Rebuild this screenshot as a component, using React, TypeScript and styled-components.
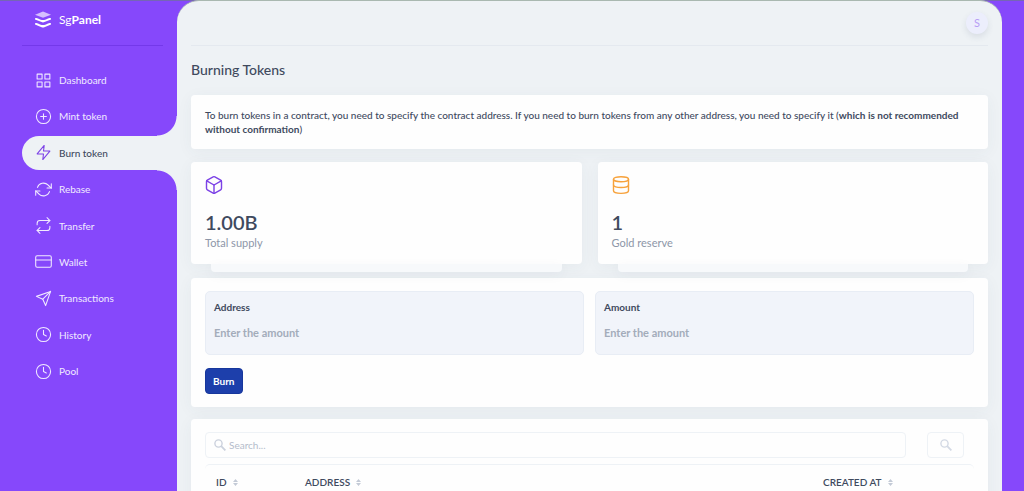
import React from "react";
import styled, { createGlobalStyle, css } from "styled-components";
import {
  FiBox,
  FiClock,
  FiCreditCard,
  FiDatabase,
  FiGrid,
  FiPlusCircle,
  FiRefreshCw,
  FiRepeat,
  FiSend,
  FiZap,
} from "react-icons/fi";
import type { IconType } from "react-icons";

const color = {
  purple: "#8648fb",
  purpleLine: "#7438ea",
  surface: "#eef2f5",
  card: "#fefefe",
  text: "#3f4a5e",
  muted: "#8d96a8",
  faint: "#a3acba",
  border: "#eef2f6",
  icon: "#7c42e6",
};

const GlobalStyle = createGlobalStyle`
  *, *::before, *::after { box-sizing: border-box; }
  body {
    margin: 0;
    background: ${color.purple};
    color: ${color.text};
    font-family: Lato, "Open Sans", sans-serif;
    font-size: 10px;
    line-height: 14px;
  }
  button, input { font: inherit; color: inherit; }
  h1, p { margin: 0; }
`;

const Page = styled.div`
  display: flex;
  min-height: 100vh;
  padding-right: 22px;
  background: linear-gradient(#7566b4 1px, transparent 1px);
`;

const Sidebar = styled.aside`
  flex: 0 0 177px;
  padding-left: 22px;
`;

const Brand = styled.a`
  display: flex;
  align-items: center;
  gap: 7px;
  height: 46px;
  margin-right: 14px;
  padding: 0 0 5px 12px;
  border-bottom: 1px solid ${color.purpleLine};
  color: #fff;
  font-size: 12px;
  text-decoration: none;
`;

const Nav = styled.nav`
  display: flex;
  flex-direction: column;
  justify-content: space-between;
  height: 325px;
  margin-top: 17px;
`;

const curve = css`
  content: "";
  position: absolute;
  right: 0;
  width: 20px;
  height: 20px;
`;

const NavLink = styled.a<{ $active?: boolean }>`
  position: relative;
  display: flex;
  align-items: center;
  gap: 7px;
  height: 34px;
  padding-left: 13px;
  color: #f1eaff;
  text-decoration: none;

  svg {
    width: 17px;
    height: 17px;
    stroke-width: 1.5;
  }

  ${({ $active }) =>
    $active &&
    css`
      border-radius: 17px 0 0 17px;
      background: ${color.surface};
      color: ${color.text};
      font-weight: 500;

      svg {
        color: ${color.icon};
      }
      &::before {
        ${curve}
        bottom: 100%;
        background: radial-gradient(circle at 0 0, transparent 19px, ${color.surface} 20px);
      }
      &::after {
        ${curve}
        top: 100%;
        background: radial-gradient(circle at 0 100%, transparent 19px, ${color.surface} 20px);
      }
    `}
`;

const Content = styled.main`
  display: flex;
  flex: 1;
  flex-direction: column;
  min-width: 0;
  padding: 0 14px;
  border-top: 1px solid #a9b8b0;
  border-radius: 22px 22px 0 0;
  background: ${color.surface};
`;

const TopBar = styled.header`
  display: flex;
  align-items: center;
  justify-content: flex-end;
  height: 45px;
  border-bottom: 1px solid #e4e9ef;
`;

const Avatar = styled.button`
  width: 22px;
  height: 22px;
  padding: 0;
  border: 0;
  border-radius: 50%;
  background: #eceefc;
  color: #b79df5;
  font-size: 11px;
  box-shadow: 0 3px 6px rgba(60, 70, 110, 0.12);
`;

const Title = styled.h1`
  margin: 14px 0 15px;
  font-size: 14px;
  font-weight: 500;
  line-height: 20px;
`;

const Card = styled.section<{ $grow?: boolean }>`
  flex: ${({ $grow }) => ($grow ? "1 0 auto" : "none")};
  padding: 13px 14px;
  border-radius: 4px;
  background: ${color.card};
  box-shadow: 0 3px 16px rgba(60, 80, 100, 0.05);
`;

const Notice = styled.p`
  font-weight: 500;
`;

const Stats = styled.div`
  display: grid;
  grid-template-columns: 1fr 1fr;
  gap: 16px;
  margin: 13px 0 14px;
`;

const StatCard = styled(Card)<{ $accent: string }>`
  position: relative;
  height: 102px;

  > svg {
    display: block;
    width: 20px;
    height: 20px;
    margin-left: -1px;
    stroke-width: 1.7;
    color: ${({ $accent }) => $accent};
  }

  &::after {
    content: "";
    position: absolute;
    top: 100%;
    right: 20px;
    left: 20px;
    height: 8px;
    border-radius: 0 0 4px 4px;
    background: #f7f9fb;
    box-shadow: 0 3px 12px rgba(60, 80, 100, 0.05);
  }
`;

const StatValue = styled.p`
  margin-top: 14px;
  font-size: 20px;
  font-weight: 600;
  line-height: 26px;
`;

const StatLabel = styled.p`
  color: ${color.muted};
  font-size: 11px;
  line-height: 16px;
`;

const Fields = styled.div`
  display: grid;
  grid-template-columns: 1fr 1fr;
  gap: 11px;
`;

const Field = styled.label`
  display: flex;
  flex-direction: column;
  gap: 12px;
  height: 64px;
  padding: 8px;
  border: 1px solid #e8edf5;
  border-radius: 5px;
  background: #f1f4fa;
  font-weight: 700;
`;

const FieldInput = styled.input`
  width: 100%;
  padding: 0;
  border: 0;
  outline: 0;
  background: none;
  font-size: 11px;

  &::placeholder {
    color: ${color.faint};
    opacity: 1;
  }
`;

const BurnButton = styled.button`
  display: block;
  height: 26px;
  margin-top: 13px;
  padding: 0 7px;
  border: 1px solid #17379c;
  border-radius: 4px;
  background: #1d3fab;
  color: #fff;
  font-weight: 700;
`;

const RecordsCard = styled(Card)`
  margin-top: 12px;
`;

const Search = styled.form`
  display: flex;
  gap: 21px;
  padding-right: 10px;
`;

const SearchBox = styled.label`
  display: flex;
  flex: 1;
  align-items: center;
  gap: 3px;
  height: 26px;
  padding: 0 8px;
  border: 1px solid ${color.border};
  border-radius: 4px;
  color: #cbd1dd;

  input {
    flex: 1;
    min-width: 0;
    padding: 0;
    border: 0;
    outline: 0;
    background: none;
    color: ${color.text};
  }
  input::placeholder {
    color: #b4bccb;
    opacity: 1;
  }
`;

const SearchButton = styled.button`
  display: grid;
  place-items: center;
  width: 37px;
  height: 26px;
  padding: 0;
  border: 1px solid ${color.border};
  border-radius: 4px;
  background: none;
  color: #d3d9e4;
`;

const TableFrame = styled.div`
  margin-top: 6px;
  border-top: 1px solid ${color.border};
  border-radius: 5px 5px 0 0;
`;

const Table = styled.table`
  width: 100%;
  border-collapse: collapse;
  table-layout: fixed;
`;

const HeadCell = styled.th<{ $width?: string }>`
  width: ${({ $width }) => $width ?? "auto"};
  height: 34px;
  padding: 0 11px;
  font-weight: 600;
  text-align: left;

  svg {
    margin-left: 6px;
  }
`;

const Logo = () => (
  <svg width="18" height="18" viewBox="0 0 18 18" fill="#fff" aria-hidden="true">
    <path d="M9 .6 17 3.7 9 6.8 1 3.7Z" opacity=".65" />
    <path d="M1 7.4C2.2 6.8 3 7.1 4 7.6 8.4 9.6 9.6 9.6 14 7.6 15 7.1 15.8 6.8 17 7.4V8.4L10.4 11.1Q9 11.7 7.6 11.1L1 8.4Z" />
    <path d="M1 12.4C2.2 11.8 3 12.1 4 12.6 8.4 14.6 9.6 14.6 14 12.6 15 12.1 15.8 11.8 17 12.4V13.4L10.4 16.3Q9 16.9 7.6 16.3L1 13.4Z" />
  </svg>
);

const Magnifier = () => (
  <svg width="12" height="12" viewBox="0 0 12 12" fill="none" stroke="currentColor" aria-hidden="true">
    <circle cx="4.5" cy="4.5" r="3.6" strokeWidth="1.4" />
    <path d="m7.2 7.2 4.2 4.2" strokeWidth="1.8" />
  </svg>
);

const SortIcon = () => (
  <svg width="5" height="7" viewBox="0 0 5 7" fill="#c3cad6" aria-hidden="true">
    <path d="M2.5 0 5 3H0ZM2.5 7 0 4H5Z" />
  </svg>
);

const links: { label: string; icon: IconType; active?: boolean }[] = [
  { label: "Dashboard", icon: FiGrid },
  { label: "Mint token", icon: FiPlusCircle },
  { label: "Burn token", icon: FiZap, active: true },
  { label: "Rebase", icon: FiRefreshCw },
  { label: "Transfer", icon: FiRepeat },
  { label: "Wallet", icon: FiCreditCard },
  { label: "Transactions", icon: FiSend },
  { label: "History", icon: FiClock },
  { label: "Pool", icon: FiClock },
];

const columns = [
  { label: "ID", width: "89px" },
  { label: "ADDRESS", width: "auto" },
  { label: "CREATED AT", width: "162px" },
];

export default function App() {
  return (
    <>
      <GlobalStyle />
      <Page>
        <Sidebar>
          <Brand href="#">
            <Logo />
            <span>
              Sg<b>Panel</b>
            </span>
          </Brand>
          <Nav>
            {links.map(({ label, icon: Icon, active }) => (
              <NavLink key={label} href="#" $active={active} aria-current={active ? "page" : undefined}>
                <Icon />
                {label}
              </NavLink>
            ))}
          </Nav>
        </Sidebar>
        <Content>
          <TopBar>
            <Avatar type="button">S</Avatar>
          </TopBar>
          <Title>Burning Tokens</Title>
          <Card>
            <Notice>
              To burn tokens in a contract, you need to specify the contract address. If you need to burn tokens from
              any other address, you need to specify it (<b>which is not recommended without confirmation</b>)
            </Notice>
          </Card>
          <Stats>
            <StatCard $accent={color.icon}>
              <FiBox />
              <StatValue>1.00B</StatValue>
              <StatLabel>Total supply</StatLabel>
            </StatCard>
            <StatCard $accent="#f7a23b">
              <FiDatabase />
              <StatValue>1</StatValue>
              <StatLabel>Gold reserve</StatLabel>
            </StatCard>
          </Stats>
          <Card as="form">
            <Fields>
              <Field>
                Address
                <FieldInput placeholder="Enter the amount" />
              </Field>
              <Field>
                Amount
                <FieldInput placeholder="Enter the amount" />
              </Field>
            </Fields>
            <BurnButton type="button">Burn</BurnButton>
          </Card>
          <RecordsCard $grow>
            <Search>
              <SearchBox>
                <Magnifier />
                <input type="search" placeholder="Search..." aria-label="Search" />
              </SearchBox>
              <SearchButton type="button" aria-label="Search">
                <Magnifier />
              </SearchButton>
            </Search>
            <TableFrame>
              <Table>
                <thead>
                  <tr>
                    {columns.map(({ label, width }) => (
                      <HeadCell key={label} $width={width}>
                        {label}
                        <SortIcon />
                      </HeadCell>
                    ))}
                  </tr>
                </thead>
              </Table>
            </TableFrame>
          </RecordsCard>
        </Content>
      </Page>
    </>
  );
}
